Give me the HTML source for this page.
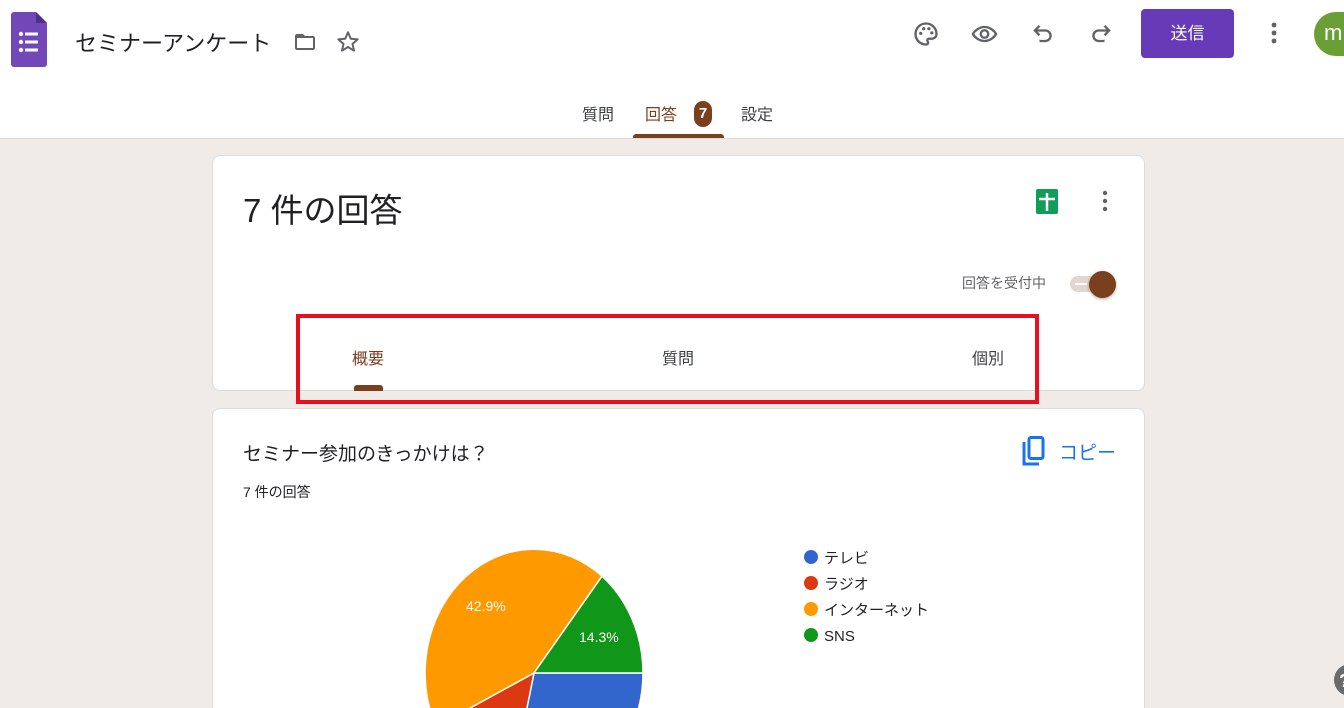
<!DOCTYPE html>
<html><head><meta charset="utf-8"><style>
*{margin:0;padding:0;box-sizing:border-box}
html,body{width:1344px;height:708px;overflow:hidden}
body{background:#f0ebe7;font-family:"Liberation Sans","Noto Sans CJK JP",sans-serif;color:#202124;position:relative}
.abs{position:absolute}
.top{position:absolute;left:0;top:0;width:1344px;height:139px;background:#fff;border-bottom:1px solid #dadce0;overflow:hidden}
.card{position:absolute;left:212px;width:933px;background:#fff;border:1px solid #dadce0;border-radius:8px}
</style></head><body>
<div class="top">
 <svg class="abs" style="left:11px;top:12px" width="36" height="55" viewBox="0 0 36 55"><path d="M3 0H25L36 11V52a3 3 0 0 1-3 3H3a3 3 0 0 1-3-3V3a3 3 0 0 1 3-3z" fill="#7248b9"/><path d="M25 0V11H36z" fill="#4e2e8f"/><g fill="#fff"><circle cx="10" cy="22" r="2.2"/><circle cx="10" cy="30" r="2.2"/><circle cx="10" cy="38" r="2.2"/><rect x="14" y="20.5" width="13" height="3"/><rect x="14" y="28.5" width="13" height="3"/><rect x="14" y="36.5" width="13" height="3"/></g></svg>
 <div class="abs" style="left:75px;top:26px;font-size:22px;color:#202124">セミナーアンケート</div>
 <svg class="abs" style="left:292px;top:30px" width="26" height="24" viewBox="0 0 24 24"><path d="M10 4H4c-1.1 0-2 .9-2 2v12c0 1.1.9 2 2 2h16c1.1 0 2-.9 2-2V8c0-1.1-.9-2-2-2h-8l-2-2zm10 14H4V8h16v10z" fill="#5f6368"/></svg>
 <svg class="abs" style="left:335px;top:29px" width="26" height="26" viewBox="0 0 24 24"><path d="M12 3l2.6 6 6.4.5-4.9 4.2 1.5 6.3L12 16.6 6.4 20l1.5-6.3L3 9.5 9.4 9z" fill="none" stroke="#5f6368" stroke-width="1.8" stroke-linejoin="round"/></svg>
 <svg class="abs" style="left:912px;top:20px" width="28" height="28" viewBox="0 0 24 24"><path d="M12 3a9 9 0 0 0 0 18c1.2 0 1.8-.8 1.8-1.6 0-.9-.7-1.2-.7-2 0-.8.6-1.4 1.5-1.4H17a4 4 0 0 0 4-4c0-5-4-9-9-9z" fill="none" stroke="#5f6368" stroke-width="2"/><g fill="#5f6368"><circle cx="7.5" cy="11.5" r="1.4"/><circle cx="10" cy="7.5" r="1.4"/><circle cx="14.5" cy="7.5" r="1.4"/><circle cx="17" cy="11" r="1.4"/></g></svg>
 <svg class="abs" style="left:970px;top:20px" width="29" height="28" viewBox="0 0 24 24"><path d="M12 6C7 6 3.5 9.5 2 12c1.5 2.5 5 6 10 6s8.5-3.5 10-6c-1.5-2.5-5-6-10-6z" fill="none" stroke="#5f6368" stroke-width="2"/><circle cx="12" cy="12" r="3.2" fill="none" stroke="#5f6368" stroke-width="2"/></svg>
 <svg class="abs" style="left:1029px;top:20px" width="28" height="28" viewBox="0 0 24 24"><path d="M9 5L5 9l4 4M5 9h9a4.5 4.5 0 0 1 0 9H9" fill="none" stroke="#5f6368" stroke-width="2"/></svg>
 <svg class="abs" style="left:1087px;top:20px" width="28" height="28" viewBox="0 0 24 24"><path d="M15 5l4 4-4 4M19 9h-9a4.5 4.5 0 0 0 0 9h5" fill="none" stroke="#5f6368" stroke-width="2"/></svg>
 <div class="abs" style="left:1141px;top:9px;width:93px;height:49px;background:#673ab7;border-radius:4px;color:#fff;font-size:17px;text-align:center;line-height:49px">送信</div>
 <svg class="abs" style="left:1264px;top:20px" width="20" height="28" viewBox="0 0 20 28"><g fill="#5f6368"><circle cx="10" cy="5" r="2.4"/><circle cx="10" cy="13" r="2.4"/><circle cx="10" cy="21" r="2.4"/></g></svg>
 <div class="abs" style="left:1314px;top:12px;width:30px;height:44px;border-radius:22px 0 0 22px;background:#6a9f35;color:#fff;font-size:22px;line-height:42px;padding-left:10px;overflow:hidden;white-space:nowrap">m</div>
 <div class="abs" style="left:582px;top:101px;font-size:16px;color:#3c4043">質問</div>
 <div class="abs" style="left:645px;top:101px;font-size:16px;color:#7a3f1d">回答</div>
 <div class="abs" style="left:694px;top:101px;width:18px;height:26px;border-radius:9px;background:#7a3f1d;color:#fff;font-size:15px;text-align:center;line-height:26px;font-weight:bold">7</div>
 <div class="abs" style="left:741px;top:101px;font-size:16px;color:#3c4043">設定</div>
 <div class="abs" style="left:633px;top:134px;width:91px;height:5px;background:#7a3f1d;border-radius:3px 3px 0 0"></div>
</div>

<div class="card" style="top:155px;height:236px">
 <div class="abs" style="left:30px;top:28px;font-size:33px;color:#202124">7 件の回答</div>
 <svg class="abs" style="left:823px;top:33px" width="22" height="25" viewBox="0 0 22 25"><rect width="22" height="25" rx="2" fill="#0f9d58"/><path d="M11 4V22M3 10H19" stroke="#fff" stroke-width="2.5"/></svg>
 <svg class="abs" style="left:884px;top:32px" width="16" height="26" viewBox="0 0 16 26"><g fill="#5f6368"><circle cx="8" cy="5" r="2.2"/><circle cx="8" cy="13" r="2.2"/><circle cx="8" cy="21" r="2.2"/></g></svg>
 <div class="abs" style="left:749px;top:117px;font-size:14px;color:#5f6368">回答を受付中</div>
 <div class="abs" style="left:857px;top:120px;width:36px;height:16px;border-radius:8px;background:#e2d6ce"></div>
 <div class="abs" style="left:862px;top:127px;width:12px;height:1.5px;background:#fff"></div>
 <div class="abs" style="left:876px;top:115px;width:27px;height:27px;border-radius:50%;background:#7a3f1d;box-shadow:0 1px 3px rgba(0,0,0,.35)"></div>
 <div class="abs" style="left:139px;top:189px;font-size:16px;color:#7a3f1d">概要</div>
 <div class="abs" style="left:449px;top:189px;font-size:16px;color:#3c4043">質問</div>
 <div class="abs" style="left:759px;top:189px;font-size:16px;color:#3c4043">個別</div>
 <div class="abs" style="left:141px;top:229px;width:29px;height:6px;background:#7a3f1d;border-radius:3px 3px 0 0"></div>
</div>
<div class="abs" style="left:296px;top:314px;width:743px;height:90px;border:4px solid #e8101e"></div>

<div class="card" style="top:408px;height:300px;border-bottom:none;border-radius:8px 8px 0 0">
 <div class="abs" style="left:30px;top:30px;font-size:19px;color:#202124">セミナー参加のきっかけは？</div>
 <div class="abs" style="left:30px;top:73px;font-size:14px;color:#202124">7 件の回答</div>
 <svg class="abs" style="left:809px;top:27px" width="24" height="31" viewBox="0 0 24 31"><rect x="7" y="1.5" width="14" height="21" rx="2" fill="none" stroke="#1a73e8" stroke-width="3"/><path d="M2 6V28H17" fill="none" stroke="#1a73e8" stroke-width="3"/></svg>
 <div class="abs" style="left:846px;top:29px;font-size:19px;color:#1a73e8">コピー</div>
</div>
<svg class="abs" style="left:0;top:0" width="1344" height="708">
 <g stroke="#fff" stroke-width="1.5">
  <path d="M534 673L643 673A109 124 0 0 1 509.7 793.9Z" fill="#3366cc"/>
  <path d="M534 673L509.7 793.9A109 124 0 0 1 435.8 726.8Z" fill="#dc3912"/>
  <path d="M534 673L435.8 726.8A109 124 0 0 1 602 576.2Z" fill="#ff9900"/>
  <path d="M534 673L602 576.2A109 124 0 0 1 643 673Z" fill="#109618"/>
 </g>
 <text x="466" y="611" font-size="14" fill="#fff" font-family="Liberation Sans">42.9%</text>
 <text x="579" y="642" font-size="14" fill="#fff" font-family="Liberation Sans">14.3%</text>
 <circle cx="811" cy="557" r="7" fill="#3366cc"/><circle cx="811" cy="583" r="7" fill="#dc3912"/>
 <circle cx="811" cy="609" r="7" fill="#ff9900"/><circle cx="811" cy="635" r="7" fill="#109618"/>
 <g font-size="15" fill="#222" font-family="Liberation Sans, Noto Sans CJK JP, sans-serif">
  <text x="824" y="563">テレビ</text><text x="824" y="589">ラジオ</text><text x="824" y="615">インターネット</text><text x="824" y="641">SNS</text>
 </g>
 <circle cx="1350" cy="680" r="16" fill="#6b6b6b"/>
 <text x="1339" y="687" font-size="18" font-weight="bold" fill="#fff" font-family="Liberation Sans">?</text>
</svg>
</body></html>
